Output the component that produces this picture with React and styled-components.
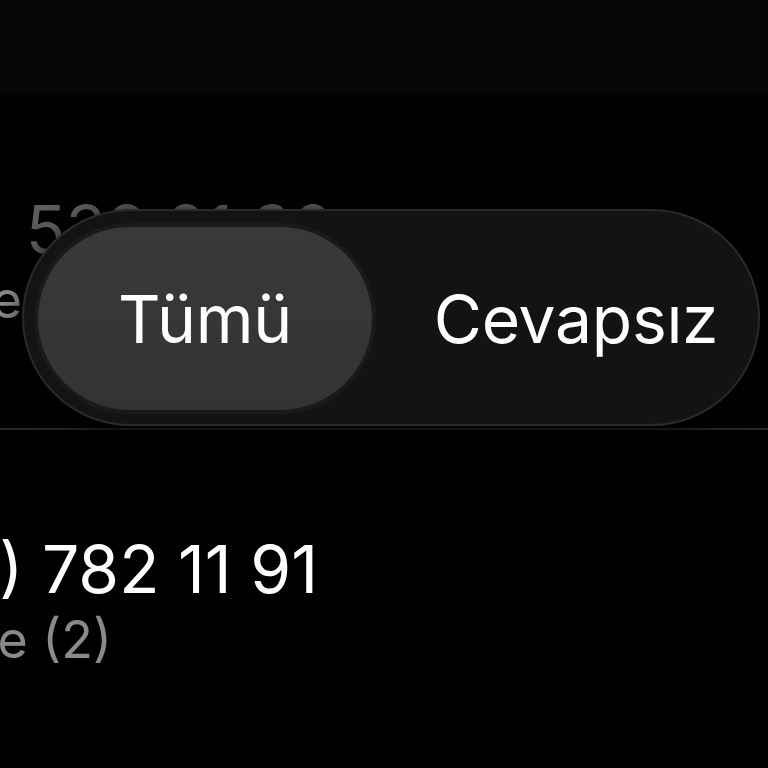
import React from "react";
import styled, { createGlobalStyle } from "styled-components";

const Global = createGlobalStyle`
    html, body {
        margin: 0;
        padding: 0;
        background: #000;
    }
    body {
        font-family: Inter, "Noto Sans", "DejaVu Sans", sans-serif;
        -webkit-font-smoothing: antialiased;
    }
`

// end = x where the visible line ends, the start runs off the left edge
const calls = [
    { id: 1, number: "0 (532) 538 21 30", place: "Türkiye", dim: true, end: 334, placeEnd: 22 },
    { id: 2, number: "0 (533) 782 11 91", place: "Türkiye (2)", dim: false, end: 318, placeEnd: 112 },
]

function App() {
    const [filter, setFilter] = React.useState("all")

    return (
        <Screen>
            <Global />
            <TopBar />

            <List>
                {calls.map(call => (
                    <Row key={call.id}>
                        <Line $end={call.end}>
                            <Number $dim={call.dim}>{call.number}</Number>
                        </Line>
                        <Line $end={call.placeEnd}>
                            <Place>{call.place}</Place>
                        </Line>
                    </Row>
                ))}
            </List>

            <Segmented>
                <Segment $active={filter === "all"} $width={334} onClick={() => setFilter("all")}>
                    Tümü
                </Segment>
                <Segment $active={filter === "missed"} $grow $shift={36} onClick={() => setFilter("missed")}>
                    Cevapsız
                </Segment>
            </Segmented>
        </Screen>
    )
}

export default App

const Screen = styled.div`
    position: relative;
    width: 768px;
    height: 768px;
    overflow: hidden;
    background: #000;
    color: #fff;
`

const TopBar = styled.div`
    height: 95px;
    background-color: #060606;
`

const List = styled.div`
    display: flex;
    flex-direction: column;
`

const Row = styled.div`
    display: flex;
    flex-direction: column;
    padding: 95px 0 97px;
    border-bottom: 2px solid #262626;

    & + & {
        padding-top: 100px;
    }

    &:last-child {
        border-bottom: none;
    }
`

const Line = styled.div`
    display: flex;
    justify-content: flex-end;
    width: ${p => p.$end}px;
    white-space: nowrap;
`

const Number = styled.span`
    font-size: 66px;
    line-height: 78px;
    font-weight: 400;
    color: ${p => (p.$dim ? "#5c5c5c" : "#fff")};
`

const Place = styled.span`
    margin-top: 1px;
    font-size: 52px;
    line-height: 62px;
    font-weight: 400;
    color: #8a8a8e;
`

const Segmented = styled.div`
    position: absolute;
    left: 22px;
    top: 209px;
    width: 738px;
    height: 217px;
    box-sizing: border-box;
    display: flex;
    align-items: stretch;
    padding: 16px 14px 14px 14px;
    border-radius: 999px;
    background-color: #131313;
    border: 2px solid #2a2a2a;
    box-shadow: 0 6px 24px #000c;
`

const Segment = styled.button`
    display: flex;
    align-items: center;
    justify-content: center;
    ${p => (p.$grow ? "flex: 1;" : `width: ${p.$width}px; flex: none;`)}
    padding: 0 0 0 ${p => p.$shift || 0}px;
    border: none;
    border-radius: 999px;
    background: ${p => (p.$active ? "linear-gradient(#393939, #333333)" : "transparent")};
    box-shadow: ${p => (p.$active ? "0 0 0 4px #1a1a1a" : "none")};
    color: #fff;
    font-family: inherit;
    font-size: 66px;
    font-weight: 400;
    letter-spacing: -0.3px;
    cursor: pointer;
`
